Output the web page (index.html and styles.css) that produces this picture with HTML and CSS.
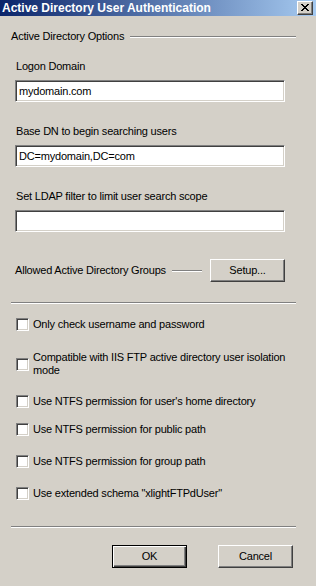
FILE: index.html
```html
<!DOCTYPE html>
<html>
<head>
<meta charset="utf-8">
<link rel="stylesheet" href="styles.css">
</head>
<body>
<div class="window">
  <div class="titlebar">
    <span class="title">Active Directory User Authentication</span>
    <span class="close-btn">
      <svg width="8" height="7" viewBox="0 0 8 7" shape-rendering="crispEdges"><path fill="#000" d="M0 0h2v1H0zM6 0h2v1H6zM1 1h2v1H1zM5 1h2v1H5zM2 2h4v1H2zM3 3h2v1H3zM2 4h4v1H2zM1 5h2v1H1zM5 5h2v1H5zM0 6h2v1H0zM6 6h2v1H6z"/></svg>
    </span>
  </div>
  <div class="content">
    <div class="group-head"><span>Active Directory Options</span><span class="etched"></span></div>

    <div class="field first">
      <div class="label">Logon Domain</div>
      <div class="textbox">mydomain.com</div>
    </div>
    <div class="field">
      <div class="label">Base DN to begin searching users</div>
      <div class="textbox">DC=mydomain,DC=com</div>
    </div>
    <div class="field">
      <div class="label">Set LDAP filter to limit user search scope</div>
      <div class="textbox"></div>
    </div>

    <div class="groups-row">
      <span>Allowed Active Directory Groups</span>
      <span class="etched short"></span>
      <span class="btn">Setup...</span>
    </div>

    <div class="sep"></div>

    <div class="options">
      <div class="opt"><span class="check"></span><span class="opt-text">Only check username and password</span></div>
      <div class="opt gap-a"><span class="check"></span><span class="opt-text wrap">Compatible with IIS FTP active directory user isolation mode</span></div>
      <div class="opt gap-b"><span class="check"></span><span class="opt-text">Use NTFS permission for user's home directory</span></div>
      <div class="opt gap-c"><span class="check"></span><span class="opt-text">Use NTFS permission for public path</span></div>
      <div class="opt gap-d"><span class="check"></span><span class="opt-text">Use NTFS permission for group path</span></div>
      <div class="opt gap-d"><span class="check"></span><span class="opt-text">Use extended schema "xlightFTPdUser"</span></div>
    </div>

    <div class="sep low"></div>

    <div class="actions">
      <span class="btn default">OK</span>
      <span class="btn">Cancel</span>
    </div>
  </div>
</div>
</body>
</html>
```

FILE: styles.css
```css
html, body {
  margin: 0;
  padding: 0;
  background: #d4d0c8;
}
body {
  font-family: "Liberation Sans", Arial, sans-serif;
  font-size: 11px;
  line-height: 13px;
  letter-spacing: -0.2px;
  color: #000;
}
.window {
  width: 316px;
  height: 586px;
  background: #d4d0c8;
  overflow: hidden;
}
.titlebar {
  height: 16px;
  background: linear-gradient(to right, #0a246a 0%, #a6caf0 100%);
  display: flex;
  align-items: center;
  justify-content: space-between;
  padding: 0 3px 0 2px;
}
.title {
  color: #fff;
  font-weight: bold;
  font-size: 12px;
  line-height: 14px;
  letter-spacing: 0;
  white-space: nowrap;
}
.close-btn {
  width: 16px;
  height: 14px;
  box-sizing: border-box;
  background: #d4d0c8;
  border: 1px solid;
  border-color: #fff #404040 #404040 #fff;
  box-shadow: inset -1px -1px 0 #808080;
  display: flex;
  align-items: center;
  justify-content: center;
  padding: 0 0 1px 0;
}
.close-btn svg { display: block; }

.content {
  padding: 0 20px 0 11px;
}
.group-head {
  margin-top: 14px;
  height: 13px;
  display: flex;
  align-items: center;
  white-space: nowrap;
}
.etched {
  flex: 1;
  height: 0;
  border-top: 1px solid #808080;
  border-bottom: 1px solid #fff;
  margin-left: 6px;
}
.etched.short {
  margin-left: 6px;
  margin-right: 8px;
}

.field {
  margin-top: 23px;
  padding-left: 4px;
}
.field.first { margin-top: 17px; }
.label {
  padding-left: 1px;
  height: 13px;
}
.textbox {
  margin-top: 7px;
  width: 270px;
  height: 22px;
  box-sizing: border-box;
  background: #fff;
  border: 1px solid;
  border-color: #808080 #fff #fff #808080;
  box-shadow: inset 1px 1px 0 #404040, inset -1px -1px 0 #d4d0c8;
  padding: 0 0 0 3px;
  display: flex;
  align-items: center;
  font-size: 11px;
  white-space: nowrap;
}

.groups-row {
  margin-top: 27px;
  padding-left: 4px;
  width: 270px;
  display: flex;
  align-items: center;
  white-space: nowrap;
}
.btn {
  width: 75px;
  height: 23px;
  box-sizing: border-box;
  background: #d4d0c8;
  border: 1px solid;
  border-color: #fff #404040 #404040 #fff;
  box-shadow: inset -1px -1px 0 #808080;
  display: flex;
  align-items: center;
  justify-content: center;
  flex: none;
}
.btn.default {
  border-color: #000;
  box-shadow: inset 1px 1px 0 #fff, inset -1px -1px 0 #404040, inset -2px -2px 0 #808080;
}

.sep {
  margin-top: 20px;
  width: 285px;
  height: 0;
  border-top: 1px solid #808080;
  border-bottom: 1px solid #fff;
}
.sep.low { margin-top: 26px; }

.options {
  margin-top: 14px;
  padding-left: 5px;
}
.opt {
  display: flex;
  align-items: center;
}
.opt.gap-a { margin-top: 20px; }
.opt.gap-b { margin-top: 18px; }
.opt.gap-c { margin-top: 15px; }
.opt.gap-d { margin-top: 19px; }
.check {
  width: 13px;
  height: 13px;
  box-sizing: border-box;
  flex: none;
  background: #fff;
  border: 1px solid;
  border-color: #808080 #fff #fff #808080;
  box-shadow: inset 1px 1px 0 #404040, inset -1px -1px 0 #d4d0c8;
  margin-right: 4px;
}
.opt-text {
  white-space: nowrap;
}
.opt-text.wrap {
  white-space: normal;
  width: 262px;
}

.actions {
  margin-top: 17px;
  width: 282px;
  display: flex;
  justify-content: flex-end;
  gap: 31px;
}
```
